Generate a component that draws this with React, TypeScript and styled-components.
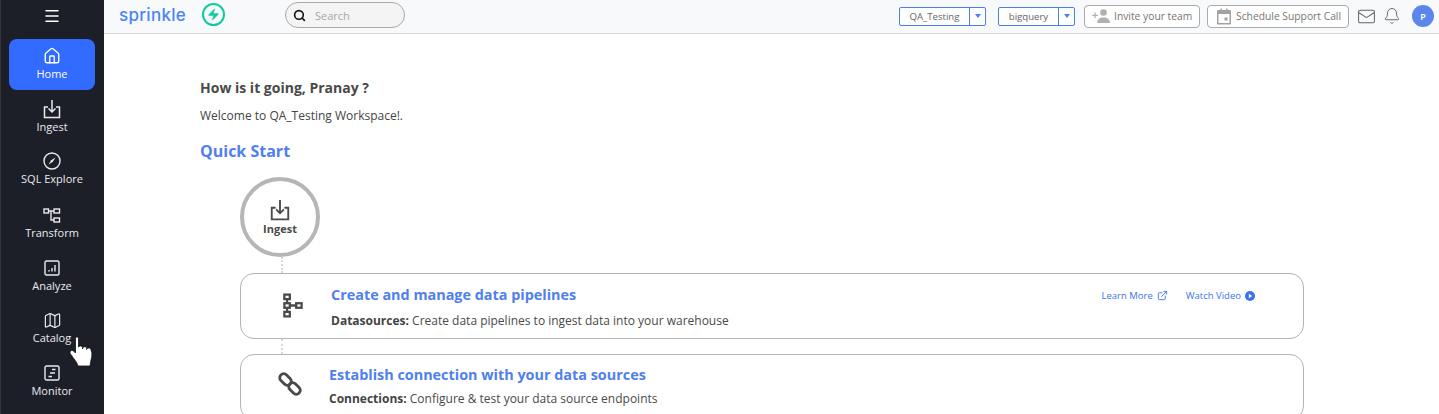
import React from "react";
import styled, { createGlobalStyle } from "styled-components";
import { Bell, ExternalLink, Home, Mail, Map, Menu, Search, Zap } from "lucide-react";

const GlobalStyle = createGlobalStyle`
  html, body {
    margin: 0;
    height: 414px;
    overflow: hidden;
    background: #fff;
    font-family: "Open Sans", "Noto Sans", sans-serif;
  }
  * { box-sizing: border-box; }
`;

const Page = styled.div`
  display: flex;
  width: 1439px;
  height: 414px;
  position: relative;
  overflow: hidden;
`;

const Sidebar = styled.nav`
  width: 104px;
  flex: none;
  background: #1c1f28;
  border-left: 1px solid #33363d;
  display: flex;
  flex-direction: column;
  align-items: center;
`;

const Burger = styled.div`
  height: 39px;
  padding-top: 7px;
  margin-left: -1px;
  color: #fff;
  display: flex;
  align-items: flex-start;
  justify-content: center;
`;

const NavList = styled.div`
  display: flex;
  flex-direction: column;
  width: 86px;
  margin-left: -1px;
`;

const NavItem = styled.div<{ $active?: boolean; $h: number }>`
  height: ${(p) => p.$h}px;
  display: flex;
  flex-direction: column;
  align-items: center;
  padding-top: ${(p) => (p.$active ? 7 : 9)}px;
  border-radius: 8px;
  background: ${(p) => (p.$active ? "#316bff" : "transparent")};
  color: ${(p) => (p.$active ? "#fff" : "#e9eaec")};
  font-size: 11px;
  line-height: 15px;
  white-space: nowrap;

  svg {
    display: block;
    flex: none;
  }
`;

const NavIcon = styled.span`
  height: 20px;
  display: flex;
  align-items: center;
`;

const Column = styled.div`
  flex: 1;
  display: flex;
  flex-direction: column;
  min-width: 0;
`;

const Topbar = styled.header`
  height: 34px;
  flex: none;
  background: #f8f9fb;
  border-bottom: 1px solid #d5d6d8;
  display: flex;
  align-items: center;
  padding: 0 5px 1px 15px;
`;

const BrandGroup = styled.div`
  display: flex;
  align-items: center;
  margin-bottom: 2px;
`;

const Logo = styled.span`
  color: #4a84f6;
  font-family: "Inter", "Open Sans", sans-serif;
  font-size: 17px;
  font-weight: 500;
  letter-spacing: 0.3px;
  width: 83px;
`;

const Bolt = styled.span`
  width: 23px;
  height: 23px;
  margin-bottom: 2px;
  border: 2px solid #12c8a0;
  border-radius: 50%;
  color: #12c8a0;
  display: flex;
  align-items: center;
  justify-content: center;
  flex: none;
`;

const SearchBox = styled.div`
  margin-left: 60px;
  width: 120px;
  height: 26px;
  border: 1px solid #a9a9a9;
  border-radius: 14px;
  background: #f4f4f4;
  display: flex;
  align-items: center;
  padding-left: 7px;
  gap: 9px;
  color: #a8a8a8;
  font-size: 11px;
`;

const Spacer = styled.div`
  flex: 1;
`;

const Picker = styled.div<{ $w: number; $gap: number }>`
  width: ${(p) => p.$w}px;
  height: 19px;
  border: 1px solid #4a7ff0;
  border-radius: 2px;
  background: #fff;
  display: flex;
  margin-right: ${(p) => p.$gap}px;
  color: #666;
  font-size: 9.6px;
  line-height: 17px;
`;

const PickerLabel = styled.span`
  flex: 1;
  text-align: center;
`;

const PickerCaret = styled.span`
  width: 16px;
  border-left: 1px solid #4a7ff0;
  display: flex;
  align-items: center;
  justify-content: center;

  &::after {
    content: "";
    border-left: 3.5px solid transparent;
    border-right: 3.5px solid transparent;
    border-top: 4px solid #4a7ff0;
  }
`;

const OutlineButton = styled.div<{ $w: number; $pad: number; $inner: number; $gap: number }>`
  width: ${(p) => p.$w}px;
  height: 23px;
  border: 1px solid #ababab;
  border-radius: 4px;
  background: #fff;
  display: flex;
  align-items: center;
  gap: ${(p) => p.$inner}px;
  padding-left: ${(p) => p.$pad}px;
  margin-right: ${(p) => p.$gap}px;
  color: #767676;
  font-size: 10.3px;
  white-space: nowrap;
`;

const TopIcon = styled.span<{ $gap: number }>`
  display: flex;
  color: #666;
  margin-right: ${(p) => p.$gap}px;
`;

const Avatar = styled.span`
  width: 22px;
  height: 22px;
  border-radius: 50%;
  background: #5b87ec;
  color: #fff;
  font-size: 9px;
  font-weight: 600;
  display: flex;
  align-items: center;
  justify-content: center;
`;

const Content = styled.main`
  flex: 1;
  padding: 44px 135px 0 96px;
`;

const Greeting = styled.h2`
  margin: 0;
  color: #4a4a4a;
  font-size: 14px;
  font-weight: 700;
  line-height: 20px;
`;

const Welcome = styled.p`
  margin: 9px 0 0;
  color: #444;
  font-size: 12px;
  line-height: 18px;
`;

const QuickStart = styled.h3`
  margin: 14px 0 0;
  color: #4f80ee;
  font-size: 16px;
  font-weight: 700;
  line-height: 24px;
`;

const Steps = styled.div`
  margin: 14px 0 0 40px;
  display: flex;
  flex-direction: column;
  align-items: flex-start;
`;

const Circle = styled.div`
  width: 80px;
  height: 80px;
  border: 4px solid #b6b6b6;
  border-radius: 50%;
  display: flex;
  flex-direction: column;
  align-items: center;
  padding-top: 17px;
  color: #4a4a4a;
  font-size: 11px;
  font-weight: 700;
  line-height: 15px;
`;

const CircleIcon = styled.span`
  height: 23px;
  display: flex;
  align-items: flex-end;
`;

const Connector = styled.div<{ $h: number }>`
  width: 0;
  height: ${(p) => p.$h}px;
  margin-left: 41px;
  border-left: 2px dotted #d8d8d8;
`;

const Card = styled.section`
  width: 1064px;
  height: 66px;
  flex: none;
  border: 1px solid #b4b4b4;
  border-radius: 14px;
  display: flex;
`;

const CardIcon = styled.div<{ $w: number; $left: number; $top: number }>`
  width: ${(p) => p.$w}px;
  flex: none;
  display: flex;
  padding: ${(p) => p.$top}px 0 0 ${(p) => p.$left}px;
  color: #4a4a4a;

  svg {
    display: block;
    flex: none;
  }
`;

const CardBody = styled.div<{ $top: number }>`
  flex: 1;
  padding-top: ${(p) => p.$top}px;
`;

const CardTitle = styled.h4`
  margin: 0;
  color: #4f80ee;
  font-size: 14.4px;
  font-weight: 700;
  line-height: 21px;
`;

const CardText = styled.p<{ $top: number }>`
  margin: ${(p) => p.$top}px 0 0;
  color: #4a4a4a;
  font-size: 12px;
  line-height: 18px;

  b {
    color: #444;
    font-weight: 700;
  }
`;

const CardLinks = styled.div`
  display: flex;
  gap: 18px;
  padding: 14px 48px 0 0;
  align-self: flex-start;
`;

const CardLink = styled.span`
  display: flex;
  align-items: center;
  gap: 4px;
  color: #3d72ec;
  font-size: 9.5px;
  line-height: 15px;
  white-space: nowrap;
`;

const Pointer = styled.svg`
  position: absolute;
  left: 68px;
  top: 335px;
`;

function IngestIcon({ size = 20, stroke = 1.5 }: { size?: number; stroke?: number }) {
  return (
    <svg width={size} height={size} viewBox="0 0 20 20" fill="none" stroke="currentColor" strokeWidth={stroke}>
      <path d="M6 8H2.500v10.500h15V8H14" />
      <path d="M10 1v12M6.500 9.500 10 13l3.500-3.500" />
    </svg>
  );
}

function CompassIcon() {
  return (
    <svg width="18" height="18" viewBox="0 0 18 18" fill="none" stroke="currentColor" strokeWidth="1.400">
      <circle cx="9" cy="9" r="8" />
      <path d="M12.500 5.500 9.800 9.800 5.500 12.500 8.200 8.200Z" fill="currentColor" stroke="none" />
    </svg>
  );
}

function AnalyzeIcon() {
  return (
    <svg width="16" height="16" viewBox="0 0 16 16" fill="none" stroke="currentColor" strokeWidth="1.400">
      <rect x="1" y="1" width="14" height="14" rx="1.500" />
      <path d="M5 11.500v-1.500M8 11.500V8M11 11.500V5" />
    </svg>
  );
}

function MonitorIcon() {
  return (
    <svg width="16" height="16" viewBox="0 0 16 16" fill="none" stroke="currentColor" strokeWidth="1.400">
      <rect x="1" y="1" width="14" height="14" rx="1.500" />
      <path d="M4.500 11.500h3.500M6 8h5M8 4.500h3.500" />
    </svg>
  );
}

function TransformIcon() {
  return (
    <svg width="18" height="15" viewBox="0 0 18 15" fill="none" stroke="currentColor" strokeWidth="1.400">
      <rect x="1" y="1" width="4.500" height="4" />
      <rect x="11" y="1" width="5.500" height="4" />
      <rect x="11" y="10" width="5.500" height="4" />
      <path d="M5.500 3H11M8 3v9h3" />
    </svg>
  );
}

function InviteIcon() {
  return (
    <svg width="18" height="14" viewBox="0 0 18 14" fill="#b0b0b0">
      <circle cx="11.500" cy="3.500" r="3.300" />
      <path d="M5 14c0-3.500 2.800-5.500 6.500-5.500S18 10.500 18 14Z" />
      <path d="M2.500 3.500h1.200v2.200h2.200v1.200H3.700v2.200H2.500V6.900H.3V5.700h2.200Z" />
    </svg>
  );
}

function CalendarIcon() {
  return (
    <svg width="14" height="17" viewBox="0 0 14 17">
      <path d="M1 2h2.500V.5h1.500V2h4V.5h1.500V2H13a1 1 0 0 1 1 1v12.500a1 1 0 0 1-1 1H1a1 1 0 0 1-1-1V3a1 1 0 0 1 1-1Zm.5 4v9h11V6Z" fill="#a2a2a2" />
      <rect x="7.500" y="9.500" width="3" height="3" fill="#a2a2a2" />
    </svg>
  );
}

function PlayIcon() {
  return (
    <svg width="10" height="10" viewBox="0 0 10 10">
      <circle cx="5" cy="5" r="5" fill="#3d72ec" />
      <path d="M3.800 2.700 7.200 5 3.800 7.300Z" fill="#fff" />
    </svg>
  );
}

function PipelineIcon() {
  return (
    <svg width="20" height="25" viewBox="0 0 22 27" fill="none" stroke="#4a4a4a" strokeWidth="2.500">
      <rect x="1.500" y="1.500" width="6" height="5" />
      <rect x="1.500" y="11" width="6" height="5" />
      <rect x="1.500" y="20.500" width="6" height="5" />
      <rect x="14.500" y="11" width="6" height="5" />
      <path d="M4.500 6.500V11M4.500 16v4.500M7.500 13.500h7" />
    </svg>
  );
}

function ChainIcon() {
  return (
    <svg width="24" height="24" viewBox="0 0 24 24" fill="none" stroke="#4a4a4a" strokeWidth="2.800">
      <rect x="1" y="3.500" width="13" height="8" rx="4" transform="rotate(45 7.500 7.500)" />
      <rect x="10" y="12.500" width="13" height="8" rx="4" transform="rotate(45 16.500 16.500)" />
    </svg>
  );
}

const navItems = [
  { label: "Ingest", h: 52, icon: <IngestIcon /> },
  { label: "SQL Explore", h: 54, icon: <CompassIcon /> },
  { label: "Transform", h: 53, icon: <TransformIcon /> },
  { label: "Analyze", h: 52, icon: <AnalyzeIcon /> },
  { label: "Catalog", h: 53, icon: <Map size={19} strokeWidth={1.500} /> },
  { label: "Monitor", h: 53, icon: <MonitorIcon /> },
];

export default function App() {
  return (
    <Page>
      <GlobalStyle />
      <Sidebar>
        <Burger>
          <Menu size={18} strokeWidth={2} />
        </Burger>
        <NavList>
          <NavItem $active $h={51}>
            <NavIcon>
              <Home size={18} strokeWidth={1.800} />
            </NavIcon>
            Home
          </NavItem>
          {navItems.map((item) => (
            <NavItem key={item.label} $h={item.h}>
              <NavIcon>{item.icon}</NavIcon>
              {item.label}
            </NavItem>
          ))}
        </NavList>
      </Sidebar>
      <Column>
        <Topbar>
          <BrandGroup>
            <Logo>sprinkle</Logo>
            <Bolt>
              <Zap size={13} fill="#12c8a0" strokeWidth={1} />
            </Bolt>
            <SearchBox>
              <Search size={13} color="#111" strokeWidth={3} />
              Search
            </SearchBox>
          </BrandGroup>
          <Spacer />
          <Picker $w={87} $gap={12}>
            <PickerLabel>QA_Testing</PickerLabel>
            <PickerCaret />
          </Picker>
          <Picker $w={77} $gap={9}>
            <PickerLabel>bigquery</PickerLabel>
            <PickerCaret />
          </Picker>
          <OutlineButton $w={116} $pad={7} $inner={4} $gap={7}>
            <InviteIcon />
            Invite your team
          </OutlineButton>
          <OutlineButton $w={142} $pad={9} $inner={5} $gap={8}>
            <CalendarIcon />
            Schedule Support Call
          </OutlineButton>
          <TopIcon $gap={7}>
            <Mail size={19} strokeWidth={1.300} />
          </TopIcon>
          <TopIcon $gap={11}>
            <Bell size={18} strokeWidth={1.300} />
          </TopIcon>
          <Avatar>P</Avatar>
        </Topbar>
        <Content>
          <Greeting>How is it going, Pranay ?</Greeting>
          <Welcome>Welcome to QA_Testing Workspace!.</Welcome>
          <QuickStart>Quick Start</QuickStart>
          <Steps>
            <Circle>
              <CircleIcon>
                <IngestIcon size={22} stroke={1.700} />
              </CircleIcon>
              Ingest
            </Circle>
            <Connector $h={16} />
            <Card>
              <CardIcon $w={90} $left={42} $top={19}>
                <PipelineIcon />
              </CardIcon>
              <CardBody $top={10}>
                <CardTitle>Create and manage data pipelines</CardTitle>
                <CardText $top={7}>
                  <b>Datasources:</b> Create data pipelines to ingest data into your warehouse
                </CardText>
              </CardBody>
              <CardLinks>
                <CardLink>
                  Learn More <ExternalLink size={11} />
                </CardLink>
                <CardLink>
                  Watch Video <PlayIcon />
                </CardLink>
              </CardLinks>
            </Card>
            <Connector $h={15} />
            <Card>
              <CardIcon $w={88} $left={37} $top={17}>
                <ChainIcon />
              </CardIcon>
              <CardBody $top={9}>
                <CardTitle>Establish connection with your data sources</CardTitle>
                <CardText $top={5}>
                  <b>Connections:</b> Configure &amp; test your data source endpoints
                </CardText>
              </CardBody>
            </Card>
          </Steps>
        </Content>
      </Column>
      <Pointer width="26" height="33" viewBox="0 0 26 33">
        <path
          d="M7.500 3.500C7.500 1.500 10.500 1.500 10.500 3.500V12C11.500 10.500 14.500 10.500 14.500 12.500V14C15 11 18.500 11 18.500 13.500V14.500C19 12.500 23 12.500 23 15C24.500 18 24 22 23 25L22 31H10C9 27 6 24 2.500 19C1 16.500 3.500 14.500 5.500 16L7.500 18Z"
          fill="#fff"
          stroke="#111"
          strokeWidth="0.800"
        />
      </Pointer>
    </Page>
  );
}
